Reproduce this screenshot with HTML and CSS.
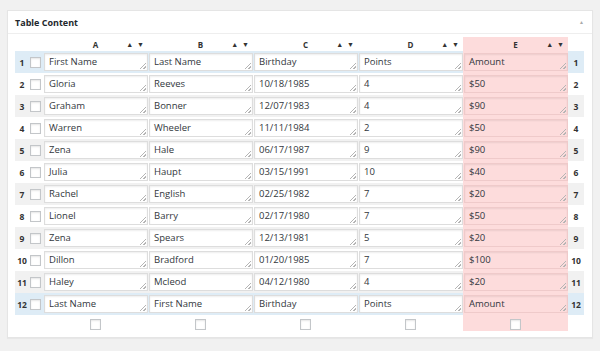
FILE: index.html
```html
<!DOCTYPE html>
<html lang="en">
<head>
  <meta charset="UTF-8">
  <title>Table Content</title>
  <link rel="stylesheet" href="styles.css">
</head>
<body>

  <div class="postbox">
    <div class="postbox-head">
      <h2>Table Content</h2>
      <span class="toggle">&#9650;</span>
    </div>

    <div class="inside">
      <table class="tp-table">
        <colgroup>
          <col class="c-num"><col class="c-check">
          <col><col><col><col><col>
          <col class="c-rnum">
        </colgroup>
        <thead>
          <tr class="head-row">
            <th></th><th></th>
            <th><span class="letter">A</span><span class="sort">&#9650; &#9660;</span></th>
            <th><span class="letter">B</span><span class="sort">&#9650; &#9660;</span></th>
            <th><span class="letter">C</span><span class="sort">&#9650; &#9660;</span></th>
            <th><span class="letter">D</span><span class="sort">&#9650; &#9660;</span></th>
            <th class="hl"><span class="letter">E</span><span class="sort">&#9650; &#9660;</span></th>
            <th></th>
          </tr>
        </thead>
        <tbody id="rows"></tbody>
        <tfoot>
          <tr class="foot-row">
            <td></td><td></td>
            <td><input type="checkbox"></td>
            <td><input type="checkbox"></td>
            <td><input type="checkbox"></td>
            <td><input type="checkbox"></td>
            <td class="hl"><input type="checkbox"></td>
            <td></td>
          </tr>
        </tfoot>
      </table>
    </div>
  </div>

  <script>
    const data = [
      ['First Name', 'Last Name', 'Birthday', 'Points', 'Amount'],
      ['Gloria', 'Reeves', '10/18/1985', '4', '$50'],
      ['Graham', 'Bonner', '12/07/1983', '4', '$90'],
      ['Warren', 'Wheeler', '11/11/1984', '2', '$50'],
      ['Zena', 'Hale', '06/17/1987', '9', '$90'],
      ['Julia', 'Haupt', '03/15/1991', '10', '$40'],
      ['Rachel', 'English', '02/25/1982', '7', '$20'],
      ['Lionel', 'Barry', '02/17/1980', '7', '$50'],
      ['Zena', 'Spears', '12/13/1981', '5', '$20'],
      ['Dillon', 'Bradford', '01/20/1985', '7', '$100'],
      ['Haley', 'Mcleod', '04/12/1980', '4', '$20'],
      ['Last Name', 'First Name', 'Birthday', 'Points', 'Amount']
    ];

    const body = document.getElementById('rows');
    data.forEach((row, i) => {
      const tr = document.createElement('tr');
      if (i === 0 || i === data.length - 1) {
        tr.className = 'head';
      } else if (i % 2 === 0) {
        tr.className = 'odd';
      }
      let html = `<td class="num">${i + 1}</td><td class="check"><input type="checkbox"></td>`;
      row.forEach((cell, c) => {
        const cls = c === 4 ? ' class="hl"' : '';
        html += `<td${cls}><textarea rows="1">${cell}</textarea></td>`;
      });
      html += `<td class="num rnum">${i + 1}</td>`;
      tr.innerHTML = html;
      body.appendChild(tr);
    });
  </script>

</body>
</html>
```

FILE: styles.css
```css
body {
  margin: 0;
  padding: 10px 7px;
  background-color: #f1f1f1;
  font-family: "Open Sans", sans-serif;
  color: #333;
}

.postbox {
  background-color: #fff;
  border: 1px solid #e5e5e5;
  box-shadow: 0 1px 1px rgba(0, 0, 0, 0.04);
  height: 328px;
  box-sizing: border-box;
}

.postbox-head {
  display: flex;
  align-items: center;
  justify-content: space-between;
  height: 22px;
  padding: 0 8px 0 7px;
  border-bottom: 1px solid #eee;
}

.postbox-head h2 {
  margin: 0;
  font-size: 9px;
  font-weight: 700;
  color: #23282d;
}

.toggle {
  font-size: 5px;
  color: #aaa;
}

.inside {
  padding: 3px 8px 0 7px;
}

.tp-table {
  width: 569px;
  border-collapse: collapse;
  table-layout: fixed;
}

.c-num { width: 14px; }
.c-check { width: 14px; }
.c-rnum { width: 16px; }

.tp-table td,
.tp-table th {
  padding: 0;
}

.head-row th {
  height: 14px;
  font-size: 8px;
  font-weight: 700;
  position: relative;
  text-align: center;
}

.letter {
  display: inline-block;
  padding-top: 1px;
}

.sort {
  position: absolute;
  right: 3px;
  top: 3px;
  font-size: 7px;
  color: #333;
  letter-spacing: 1px;
}

.hl {
  background-color: #fddcdc;
}

tbody tr {
  height: 22px;
}

tbody tr.odd {
  background-color: #f1f1f1;
}

tbody tr.head {
  background-color: #deecf6;
}

tbody tr .hl {
  background-color: #fddcdc;
}

.num {
  font-size: 8.5px;
  font-weight: 700;
  text-align: center;
  color: #333;
}

.rnum {
  text-align: center;
}

.check {
  text-align: left;
}

textarea {
  display: block;
  box-sizing: border-box;
  width: 104px;
  height: 18px;
  margin: 0 0 0 1px;
  padding: 2px 4px;
  border: 1px solid #ddd;
  box-shadow: inset 0 1px 2px rgba(0, 0, 0, 0.07);
  background: #fff linear-gradient(135deg,
    transparent 0 52%, #b5b5b5 52% 62%, transparent 62% 76%,
    #b5b5b5 76% 86%, transparent 86%) no-repeat right 1px bottom 1px / 7px 7px;
  font-family: "Open Sans", sans-serif;
  font-size: 9.5px;
  line-height: 12px;
  color: #32373c;
  overflow: hidden;
  resize: none;
}

.hl textarea {
  background-color: #fddcdc;
  border-color: #efcaca;
}

input[type="checkbox"] {
  -webkit-appearance: none;
  appearance: none;
  display: block;
  width: 11px;
  height: 11px;
  margin: 0 0 0 1px;
  border: 1px solid #c3c6c9;
  background-color: #fff;
  box-shadow: inset 0 1px 2px rgba(0, 0, 0, 0.1);
  box-sizing: border-box;
}

.foot-row td {
  height: 16px;
}

.foot-row input[type="checkbox"] {
  margin: 2px auto 0;
}
```
